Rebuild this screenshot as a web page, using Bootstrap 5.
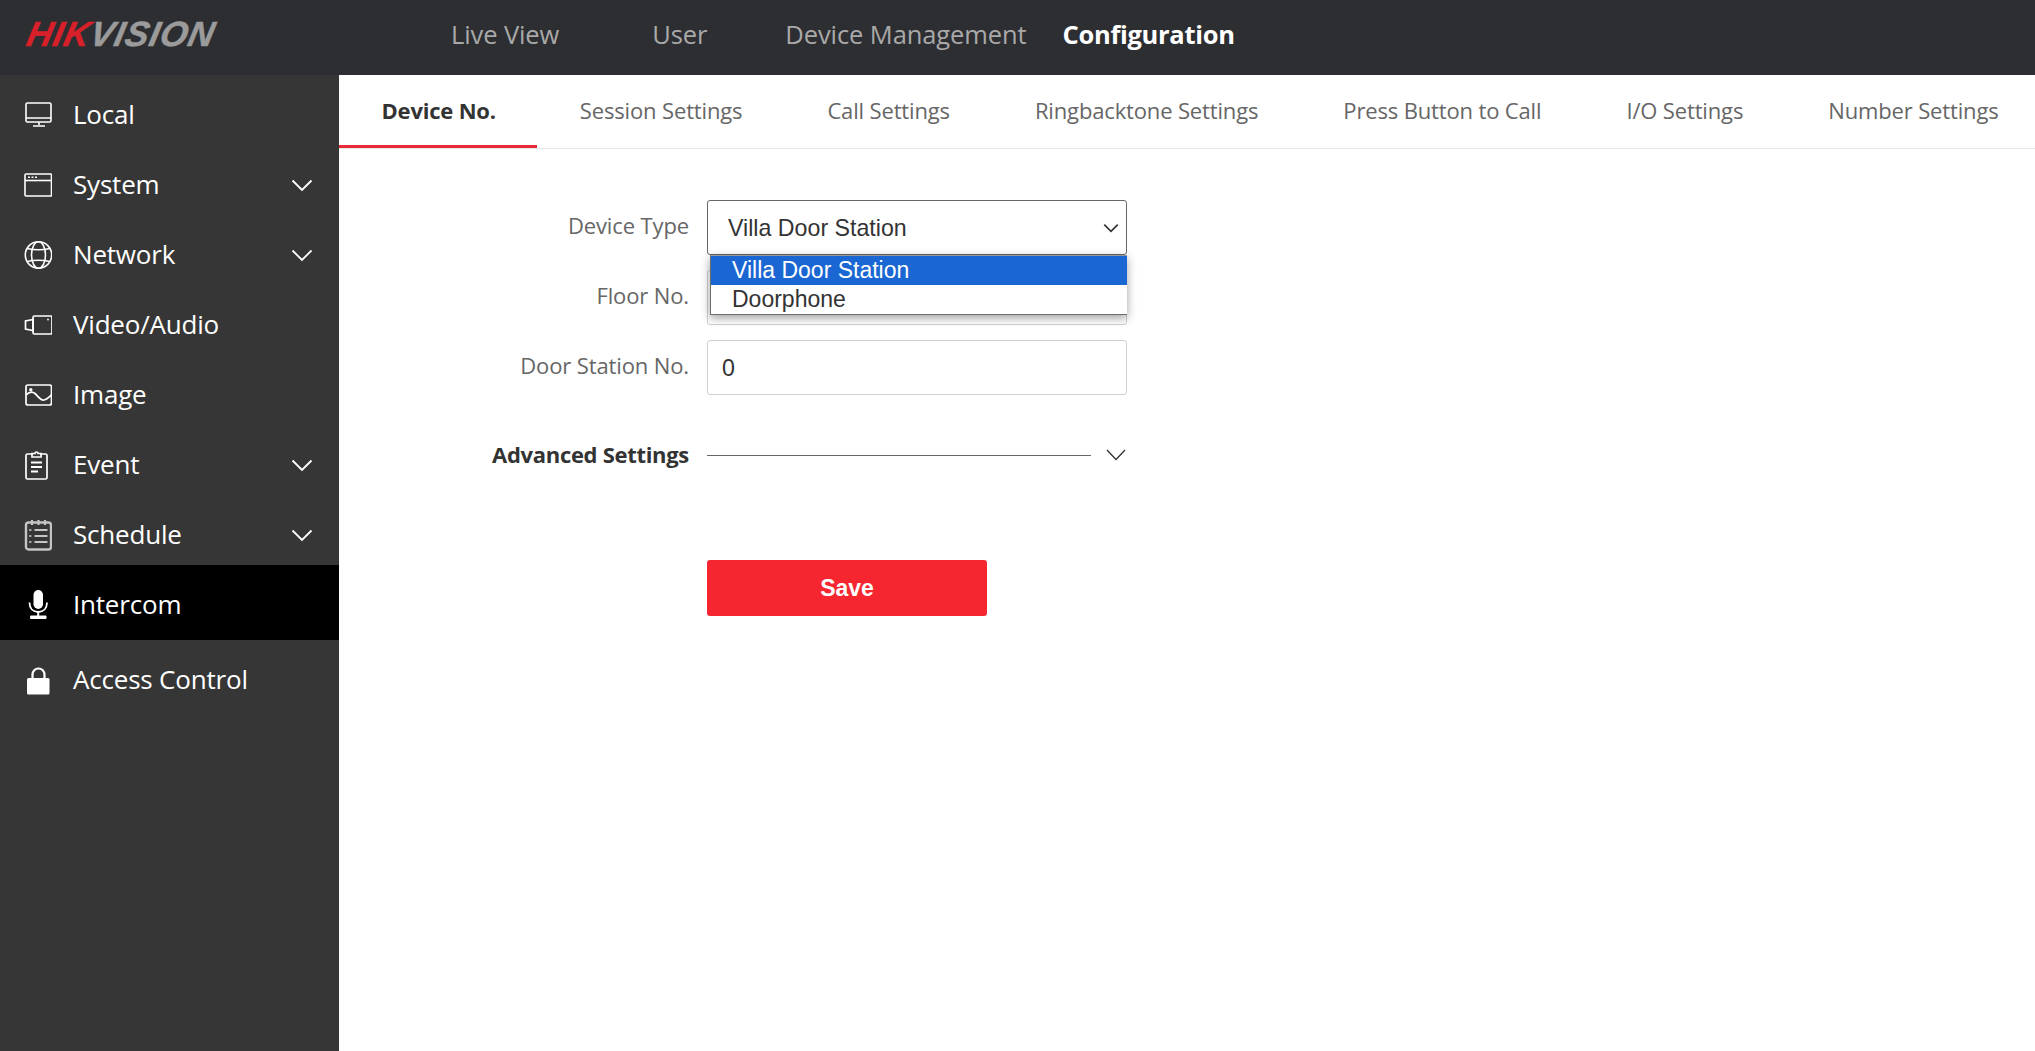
<!DOCTYPE html>
<html lang="en">
<head>
<meta charset="utf-8">
<title>Configuration</title>
<link href="https://cdn.jsdelivr.net/npm/bootstrap@5.3.0/dist/css/bootstrap.min.css" rel="stylesheet">
<style>
html,body{height:100%;overflow:hidden}
body{font-family:"Open Sans","Liberation Sans",sans-serif;background:#fff}
.topbar{height:75px;background:#2d2e32;flex:none}
.brand-logo{width:339px;padding-left:24px;margin-top:-8px;flex:none;font:italic 700 35px/1 "Liberation Sans",sans-serif;letter-spacing:.95px;white-space:nowrap}
.brand-logo span{display:inline-block;transform:skewX(-12deg);transform-origin:left bottom}
.brand-logo b{color:#d8202a;font-weight:700;-webkit-text-stroke:.5px #d8202a}
.brand-logo i{color:#9b9b9b;font-weight:700;-webkit-text-stroke:.5px #9b9b9b}
.topnav{padding-left:112px;margin-bottom:8px}
.topnav .nav-link{padding:0;color:#a9a9a9;font-size:25.5px;letter-spacing:-.1px;line-height:68px;white-space:nowrap}
.topnav .nav-item:nth-child(1){margin-right:93px}
.topnav .nav-item:nth-child(2){margin-right:78px}
.topnav .nav-item:nth-child(3){margin-right:36px}
.topnav .nav-link.active{color:#fff;font-weight:700;letter-spacing:-.3px}
.sidebar{width:339px;flex:none;background:#363636;padding-top:5px}
.sidelink{height:70px;padding-left:24px;padding-right:26px;color:#fff;font-size:26px;letter-spacing:-.2px;text-decoration:none;line-height:1.3}
.sidelink svg.ic{width:28px;height:32px;margin-right:21px;flex:none}
.sidelink svg.cv{width:22px;height:13px;margin-left:auto;flex:none}
.sidelink span{margin-top:-1px}
.sidelink.on{background:#000;height:75px;margin-top:-5px;padding-top:5px}
.sidelink.last{height:80px;padding-top:1px}
.tabbar{height:74px;border-bottom:1px solid #e6e6e6;flex:none}
.tabbar .nav-link{padding:0 42.5px;height:73px;line-height:70px;color:#666;font-size:22px;letter-spacing:-.15px;white-space:nowrap}
.tabbar .nav-link.active{color:#333;font-weight:700;border-bottom:3px solid #e72b36;letter-spacing:-.2px;padding-right:41.5px}
.formbox{padding:51px 0 0 0;width:788px}
.frow{height:55px;margin-bottom:15px;gap:18px}
.frow label{width:350px;text-align:right;color:#666;font-size:22px;letter-spacing:-.12px;margin:0 0 4px;flex:none}
.fwrap{width:420px;flex:none;position:relative}
.fwrap .form-control,.fwrap .form-select{height:55px;border-radius:3px;font:23.2px "Liberation Sans",sans-serif;color:#333}
.fwrap .form-control{border-color:#d0d0d0;padding:2px 14px 0;box-shadow:none}
.fwrap .form-select{border-color:#666;padding-left:20px;background-image:url("data:image/svg+xml,%3csvg xmlns='http://www.w3.org/2000/svg' viewBox='0 0 16 16'%3e%3cpath fill='none' stroke='%23333' stroke-width='1.500' d='M2 5l6 6 6-6'/%3e%3c/svg%3e");background-position:right 6px center;background-size:18px 18px;box-shadow:none}
.optlist{position:absolute;left:3px;top:55px;width:417px;height:60px;background:#fff;border:1px solid #6e6e6e;border-top-color:#999;border-right:0;box-shadow:0 3px 9px rgba(0,0,0,.38);z-index:5;font:23px/29px "Liberation Sans",sans-serif;color:#333}
.optlist div{height:29px;padding-left:21px}
.optlist .picked{background:#1a66d2;color:#fff;height:29px}
.advrow{height:26px;margin-top:47px;gap:18px}
.advrow strong{width:350px;text-align:right;color:#333;font-size:22px;letter-spacing:-.3px;flex:none;margin-bottom:2px}
.advline{width:384px;height:1px;background:#666;flex:none}
.advrow svg{width:20px;height:12px;margin-left:-3px;flex:none}
.savebtn{width:280px;height:56px;margin:92px 0 0 368px;background:#f5262f;border:0;border-radius:3px;color:#fff;font:700 23px "Liberation Sans",sans-serif;padding:0}
.savebtn:hover{background:#f5262f;color:#fff}
</style>
</head>
<body class="d-flex flex-column">
<header class="topbar d-flex align-items-center">
  <div class="brand-logo"><span><b>HIK</b><i>VISION</i></span></div>
  <ul class="nav topnav flex-nowrap">
    <li class="nav-item"><a class="nav-link" href="#">Live View</a></li>
    <li class="nav-item"><a class="nav-link" href="#">User</a></li>
    <li class="nav-item"><a class="nav-link" href="#">Device Management</a></li>
    <li class="nav-item"><a class="nav-link active" href="#">Configuration</a></li>
  </ul>
</header>
<div class="d-flex flex-grow-1" style="min-height:0">
  <nav class="sidebar d-flex flex-column">
    <a class="sidelink d-flex align-items-center" href="#">
      <svg class="ic" viewBox="0 0 28 32" fill="none" stroke="#fff" stroke-width="1.6"><rect x="2" y="4" width="25" height="19" rx="1.5"/><path d="M2 19h25M15 23v3M9 27h12" /></svg><span>Local</span></a>
    <a class="sidelink d-flex align-items-center" href="#">
      <svg class="ic" viewBox="0 0 28 32" fill="none" stroke="#fff" stroke-width="1.6"><rect x="1" y="5" width="26.500" height="22" rx="1"/><path d="M1 11.500h26.500"/><path d="M4 8.300h2M7.500 8.300h2M11 8.300h2" stroke-width="1.500"/></svg><span>System</span>
      <svg class="cv" viewBox="0 0 22 13" fill="none" stroke="#fff" stroke-width="1.800"><path d="M1.500 1.500 11 11l9.500-9.500"/></svg></a>
    <a class="sidelink d-flex align-items-center" href="#">
      <svg class="ic" viewBox="0 0 28 32" fill="none" stroke="#fff" stroke-width="1.600"><circle cx="14.500" cy="16" r="13.200"/><ellipse cx="14.500" cy="16" rx="7" ry="13.200"/><path d="M3 9.500c7 1.500 16 1.500 23 0M3 22.500c7-1.500 16-1.500 23 0"/></svg><span>Network</span>
      <svg class="cv" viewBox="0 0 22 13" fill="none" stroke="#fff" stroke-width="1.800"><path d="M1.500 1.500 11 11l9.500-9.500"/></svg></a>
    <a class="sidelink d-flex align-items-center" href="#">
      <svg class="ic" viewBox="0 0 28 32" fill="none" stroke="#fff" stroke-width="1.700"><rect x="9" y="7" width="19" height="18" rx="1.500"/><path d="M9 10.500 1.500 12v8L9 21.500z"/><circle cx="24" cy="10.500" r=".9" fill="#fff" stroke="none"/></svg><span>Video/Audio</span></a>
    <a class="sidelink d-flex align-items-center" href="#">
      <svg class="ic" viewBox="0 0 28 32" fill="none" stroke="#fff" stroke-width="1.700"><rect x="2" y="6" width="25.500" height="20" rx="2"/><circle cx="6.800" cy="10.800" r="1.700" fill="#fff" stroke="none"/><path d="M2 16c3-3 6-4 9-1.500s5 7 9 6.500c3-.3 5-3 7.500-5"/></svg><span>Image</span></a>
    <a class="sidelink d-flex align-items-center" href="#">
      <svg class="ic" viewBox="0 0 28 32" fill="none" stroke="#fff" stroke-width="1.700"><path d="M9 5H3.500a1.500 1.500 0 0 0-1.500 1.500v22a1.500 1.500 0 0 0 1.500 1.500h18a1.500 1.500 0 0 0 1.500-1.500v-22A1.500 1.500 0 0 0 21.500 5H16"/><path d="M8 8V4.500h3a1.500 1.500 0 0 1 3 0h3V8z"/><path d="M7 13.500h11M7 18h11M7 22.500h7" stroke-width="1.800"/></svg><span>Event</span>
      <svg class="cv" viewBox="0 0 22 13" fill="none" stroke="#fff" stroke-width="1.800"><path d="M1.500 1.500 11 11l9.500-9.500"/></svg></a>
    <a class="sidelink d-flex align-items-center" href="#">
      <svg class="ic" viewBox="0 0 28 32" fill="none" stroke="#c4c4c4" stroke-width="2.400"><rect x="2" y="3.500" width="25" height="27" rx="2.500"/><path d="M8 1v5M14.500 1v5M21 1v5" stroke-width="2.200"/><path d="M10.500 11h13M10.500 17h13M10.500 23h13" stroke-width="2.200"/><path d="M5 11h2.500M5 17h2.500M5 23h2.500" stroke-width="1.400"/></svg><span>Schedule</span>
      <svg class="cv" viewBox="0 0 22 13" fill="none" stroke="#fff" stroke-width="1.800"><path d="M1.500 1.500 11 11l9.500-9.500"/></svg></a>
    <a class="sidelink on d-flex align-items-center" href="#">
      <svg class="ic" viewBox="0 0 28 32" fill="none"><rect x="9.500" y="1" width="9.500" height="19" rx="4.750" fill="#fff"/><path d="M5.500 13.500c0 6 3.500 9.500 8.700 9.500s8.800-3.500 8.800-9.500" stroke="#fff" stroke-width="1.800"/><path d="M14.200 23v4" stroke="#fff" stroke-width="2"/><rect x="6" y="26.500" width="16.500" height="3.500" rx="1" fill="#fff"/></svg><span>Intercom</span></a>
    <a class="sidelink last d-flex align-items-center" href="#">
      <svg class="ic" viewBox="0 0 28 32" fill="none"><path d="M8.500 15V9.500a6 6 0 0 1 12 0V15" stroke="#fff" stroke-width="2.200"/><rect x="3" y="13" width="22.500" height="16.500" rx="1.500" fill="#fff"/></svg><span>Access Control</span></a>
  </nav>
  <main class="flex-grow-1 d-flex flex-column">
    <ul class="nav tabbar flex-nowrap">
      <li class="nav-item"><a class="nav-link active" href="#">Device No.</a></li>
      <li class="nav-item"><a class="nav-link" href="#">Session Settings</a></li>
      <li class="nav-item"><a class="nav-link" href="#">Call Settings</a></li>
      <li class="nav-item"><a class="nav-link" href="#">Ringbacktone Settings</a></li>
      <li class="nav-item"><a class="nav-link" href="#">Press Button to Call</a></li>
      <li class="nav-item"><a class="nav-link" href="#">I/O Settings</a></li>
      <li class="nav-item"><a class="nav-link" href="#">Number Settings</a></li>
    </ul>
    <form class="formbox">
      <div class="frow d-flex align-items-center">
        <label for="dtype">Device Type</label>
        <div class="fwrap">
          <select id="dtype" class="form-select"><option>Villa Door Station</option><option>Doorphone</option></select>
          <div class="optlist"><div class="picked">Villa Door Station</div><div>Doorphone</div></div>
        </div>
      </div>
      <div class="frow d-flex align-items-center">
        <label for="fno">Floor No.</label>
        <div class="fwrap"><input id="fno" class="form-control" value="1"></div>
      </div>
      <div class="frow d-flex align-items-center">
        <label for="dno">Door Station No.</label>
        <div class="fwrap"><input id="dno" class="form-control" value="0"></div>
      </div>
      <div class="advrow d-flex align-items-center">
        <strong>Advanced Settings</strong>
        <span class="advline"></span>
        <svg viewBox="0 0 20 12" fill="none" stroke="#333" stroke-width="1.300"><path d="M1 1l9 9.500L19 1"/></svg>
      </div>
      <button type="button" class="btn savebtn d-block">Save</button>
    </form>
  </main>
</div>
</body>
</html>
